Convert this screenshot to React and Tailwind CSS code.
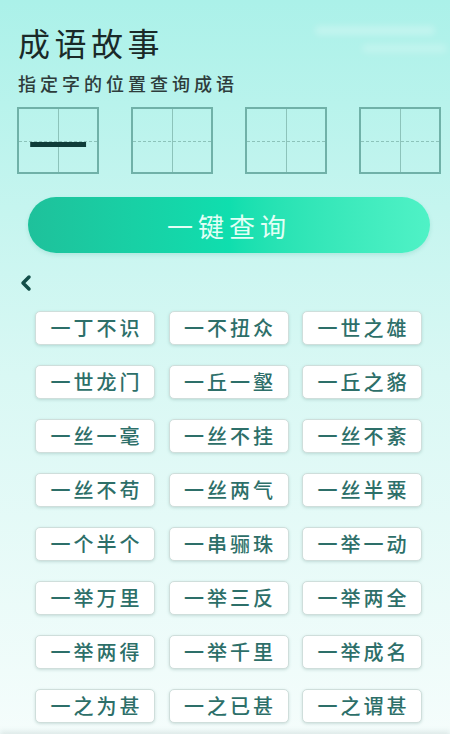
import React from "react";
import { ChevronLeft } from "lucide-react";

const idioms = [
  "一丁不识", "一不扭众", "一世之雄",
  "一世龙门", "一丘一壑", "一丘之貉",
  "一丝一毫", "一丝不挂", "一丝不紊",
  "一丝不苟", "一丝两气", "一丝半粟",
  "一个半个", "一串骊珠", "一举一动",
  "一举万里", "一举三反", "一举两全",
  "一举两得", "一举千里", "一举成名",
  "一之为甚", "一之已甚", "一之谓甚",
];

const font = { fontFamily: '"Noto Sans CJK SC", "Noto Sans", sans-serif' };

function CharBox({ ch }) {
  return (
    <div className="relative w-[82px] h-[67px] border-2 border-[#70b1a8] flex items-center justify-center">
      {/* tian zi ge guide lines */}
      <div className="absolute left-1/2 top-0 bottom-0 border-l border-[#8cc3ba]" />
      <div className="absolute top-1/2 left-0 right-0 border-t border-dashed border-[#8cc3ba]" />
      {ch && (
        <span className="relative text-[61px] leading-none text-[#0f3d39] mt-[3px]">{ch}</span>
      )}
    </div>
  );
}

export default function App() {
  return (
    <div
      style={font}
      className="relative w-[450px] h-[750px] overflow-hidden bg-gradient-to-b from-[#abf1e9] via-[#d9f8f4] to-[#f6fdfc]"
    >
      {/* faint clouds top right */}
      <div className="absolute left-[315px] top-[26px] w-[120px] h-[9px] rounded-full bg-white/25 blur-[3px]" />
      <div className="absolute left-[362px] top-[44px] w-[85px] h-[9px] rounded-full bg-white/20 blur-[3px]" />

      <div className="relative pl-[18px] pt-[24px]">
        <h1 className="text-[32px] leading-[36px] tracking-[4.5px] text-[#1a2928]">成语故事</h1>
        <p className="mt-[11px] text-[18px] leading-[24px] tracking-[4px] font-medium text-[#2e3c3b]">
          指定字的位置查询成语
        </p>
      </div>

      <div className="relative flex gap-[32px] pl-[17px] mt-[12px]">
        <CharBox ch="一" />
        <CharBox />
        <CharBox />
        <CharBox />
      </div>

      <div className="relative pl-[28px] pr-[20px] mt-[23px]">
        <button className="w-full h-[56px] rounded-full bg-gradient-to-r from-[#1ec19b] via-[#0fdeae] to-[#4ff2c6] text-[#e3fff6] text-[26px] tracking-[5px] shadow-[0_2px_4px_rgba(20,150,120,0.15)]">
          一键查询
        </button>
      </div>

      <div className="relative pl-[14px] mt-[20px] h-[20px] flex items-center">
        <ChevronLeft className="w-[24px] h-[24px] text-[#134f49]" strokeWidth={3.5} />
      </div>

      <div className="relative grid grid-cols-[120px_120px_120px] gap-x-[13.5px] gap-y-[20px] pl-[35px] mt-[18px]">
        {idioms.map((w) => (
          <div
            key={w}
            className="h-[34px] rounded-[5px] bg-white border border-[#cfdedb] shadow-[0_1px_3px_rgba(80,130,125,0.25)] flex items-center justify-center text-[20px] tracking-[3px] font-medium text-[#2d6f69] pl-[3px]"
          >
            {w}
          </div>
        ))}
      </div>

      <div className="absolute left-0 right-0 bottom-0 h-[16px] bg-white shadow-[0_-3px_5px_rgba(120,150,150,0.18)]" />
    </div>
  );
}
